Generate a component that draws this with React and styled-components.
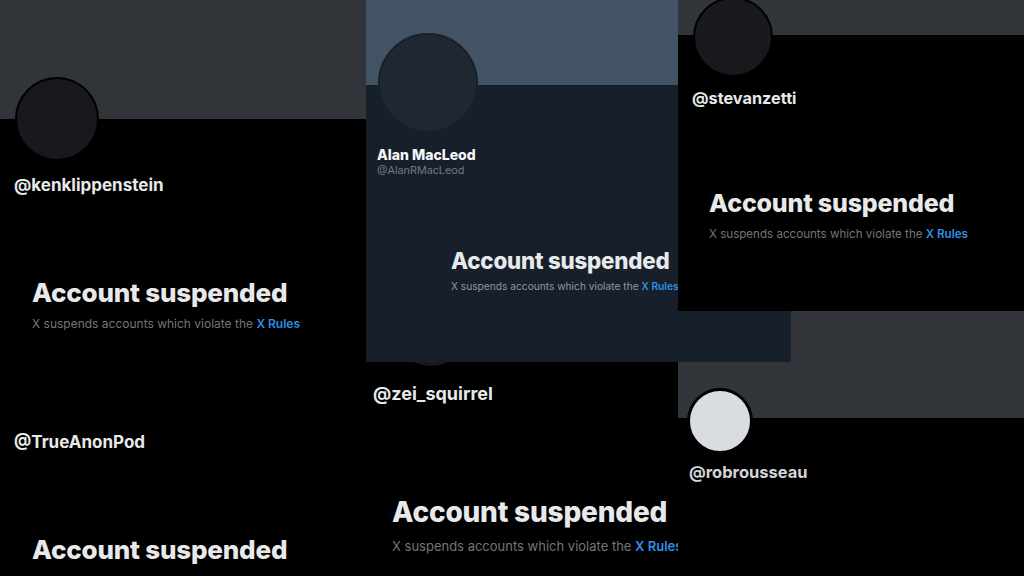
import styled, { createGlobalStyle } from "styled-components";

const GlobalStyle = createGlobalStyle`
  html, body {
    margin: 0;
    padding: 0;
    background: #000000;
  }
  body {
    font-family: Inter, "Noto Sans", "Liberation Sans", sans-serif;
  }
`;

const Canvas = styled.div`
  position: relative;
  width: 1024px;
  height: 576px;
  overflow: hidden;
  background: #000000;
`;

// each cropped screenshot is a window on the collage
const Shot = styled.div`
  position: absolute;
  left: ${p => p.$x}px;
  top: ${p => p.$y}px;
  width: ${p => p.$w}px;
  height: ${p => p.$h}px;
  background: ${p => p.$bg || "#000000"};
  display: flex;
  flex-direction: column;
  align-items: flex-start;
`;

const Banner = styled.div`
  align-self: stretch;
  flex-shrink: 0;
  height: ${p => p.$h}px;
  background: ${p => p.$color};
`;

const Avatar = styled.div`
  flex-shrink: 0;
  box-sizing: border-box;
  width: ${p => p.$size}px;
  height: ${p => p.$size}px;
  margin-top: ${p => p.$top}px;
  margin-left: ${p => p.$left}px;
  border-radius: 50%;
  background: ${p => p.$fill};
  border: ${p => p.$border || 2}px solid ${p => p.$ring || "#000000"};
`;

const Handle = styled.div`
  margin-top: ${p => p.$top}px;
  margin-left: ${p => p.$left}px;
  font-size: ${p => p.$size}px;
  line-height: ${p => Math.round(p.$size + 4)}px;
  font-weight: 700;
  color: ${p => p.$color || "#e7e9ea"};
  white-space: nowrap;
`;

const Name = styled.div`
  margin-top: 13px;
  margin-left: 11px;
  font-size: 14px;
  line-height: 18px;
  font-weight: 800;
  color: #f4f6f8;
`;

const SubHandle = styled.div`
  margin-left: 11px;
  font-size: 10.8px;
  line-height: 14px;
  color: #6e7a86;
`;

const Notice = styled.div`
  margin-top: ${p => p.$top}px;
  margin-left: ${p => p.$left}px;
  display: flex;
  flex-direction: column;
  gap: ${p => p.$gap}px;
  white-space: nowrap;
`;

const Headline = styled.div`
  font-size: ${p => p.$size}px;
  line-height: ${p => Math.round(p.$size * 1.22)}px;
  font-weight: 800;
  letter-spacing: -0.2px;
  color: #e7e9ea;
`;

const Reason = styled.div`
  font-size: ${p => p.$size}px;
  line-height: ${p => Math.round(p.$size * 1.3)}px;
  color: ${p => p.$color || "#71767b"};

  a {
    color: #2f8fe0;
    font-weight: 600;
    text-decoration: none;
  }
`;

function Suspended({ top, left, size, sub, gap, subColor }) {
  return (
    <Notice $top={top} $left={left} $gap={gap}>
      <Headline $size={size}>Account suspended</Headline>
      {sub && (
        <Reason $size={sub} $color={subColor}>
          X suspends accounts which violate the <a>X Rules</a>
        </Reason>
      )}
    </Notice>
  );
}

export default function App() {
  return (
    <>
      <GlobalStyle />
      <Canvas>
        <Shot $x={0} $y={0} $w={366} $h={400}>
          <Banner $h={119} $color="#313539" />
          <Avatar $size={84} $top={-42} $left={15} $fill="#17191d" />
          <Handle $top={14} $left={14} $size={17}>@kenklippenstein</Handle>
          <Suspended top={81} left={32} size={26} sub={12} gap={7} />
        </Shot>

        <Shot $x={0} $y={400} $w={366} $h={176}>
          <Handle $top={32} $left={14} $size={17}>@TrueAnonPod</Handle>
          <Suspended top={81} left={32} size={26} gap={7} />
        </Shot>

        <Shot $x={366} $y={362} $w={312} $h={214}>
          <Avatar $size={82} $top={-76} $left={24} $fill="#17191d" />
          <Handle $top={15} $left={7} $size={18}>@zei_squirrel</Handle>
          <Suspended top={90} left={26} size={28} sub={13} gap={9} />
        </Shot>

        <Shot $x={678} $y={311} $w={346} $h={265}>
          <Banner $h={107} $color="#313539" />
          <Avatar $size={66} $top={-30} $left={9} $fill="#d9dde1" $border={3} />
          <Handle $top={8} $left={11} $size={16.5} $color="#d3d6d9">@robrousseau</Handle>
        </Shot>

        <Shot $x={366} $y={0} $w={425} $h={362} $bg="#17202a">
          <Banner $h={85} $color="#425365" />
          <Avatar $size={100} $top={-52} $left={12} $fill="#1f2733" $ring="#17202a" />
          <Name>Alan MacLeod</Name>
          <SubHandle>@AlanRMacLeod</SubHandle>
          <Suspended top={69} left={85} size={22.3} sub={10.2} gap={6} subColor="#8b98a5" />
        </Shot>

        <Shot $x={678} $y={0} $w={346} $h={311}>
          <Banner $h={35} $color="#313539" />
          <Avatar $size={80} $top={-38} $left={15} $fill="#17191d" />
          <Handle $top={11} $left={14} $size={16.3}>@stevanzetti</Handle>
          <Suspended top={80} left={31} size={25} sub={11.6} gap={8} />
        </Shot>
      </Canvas>
    </>
  );
}
